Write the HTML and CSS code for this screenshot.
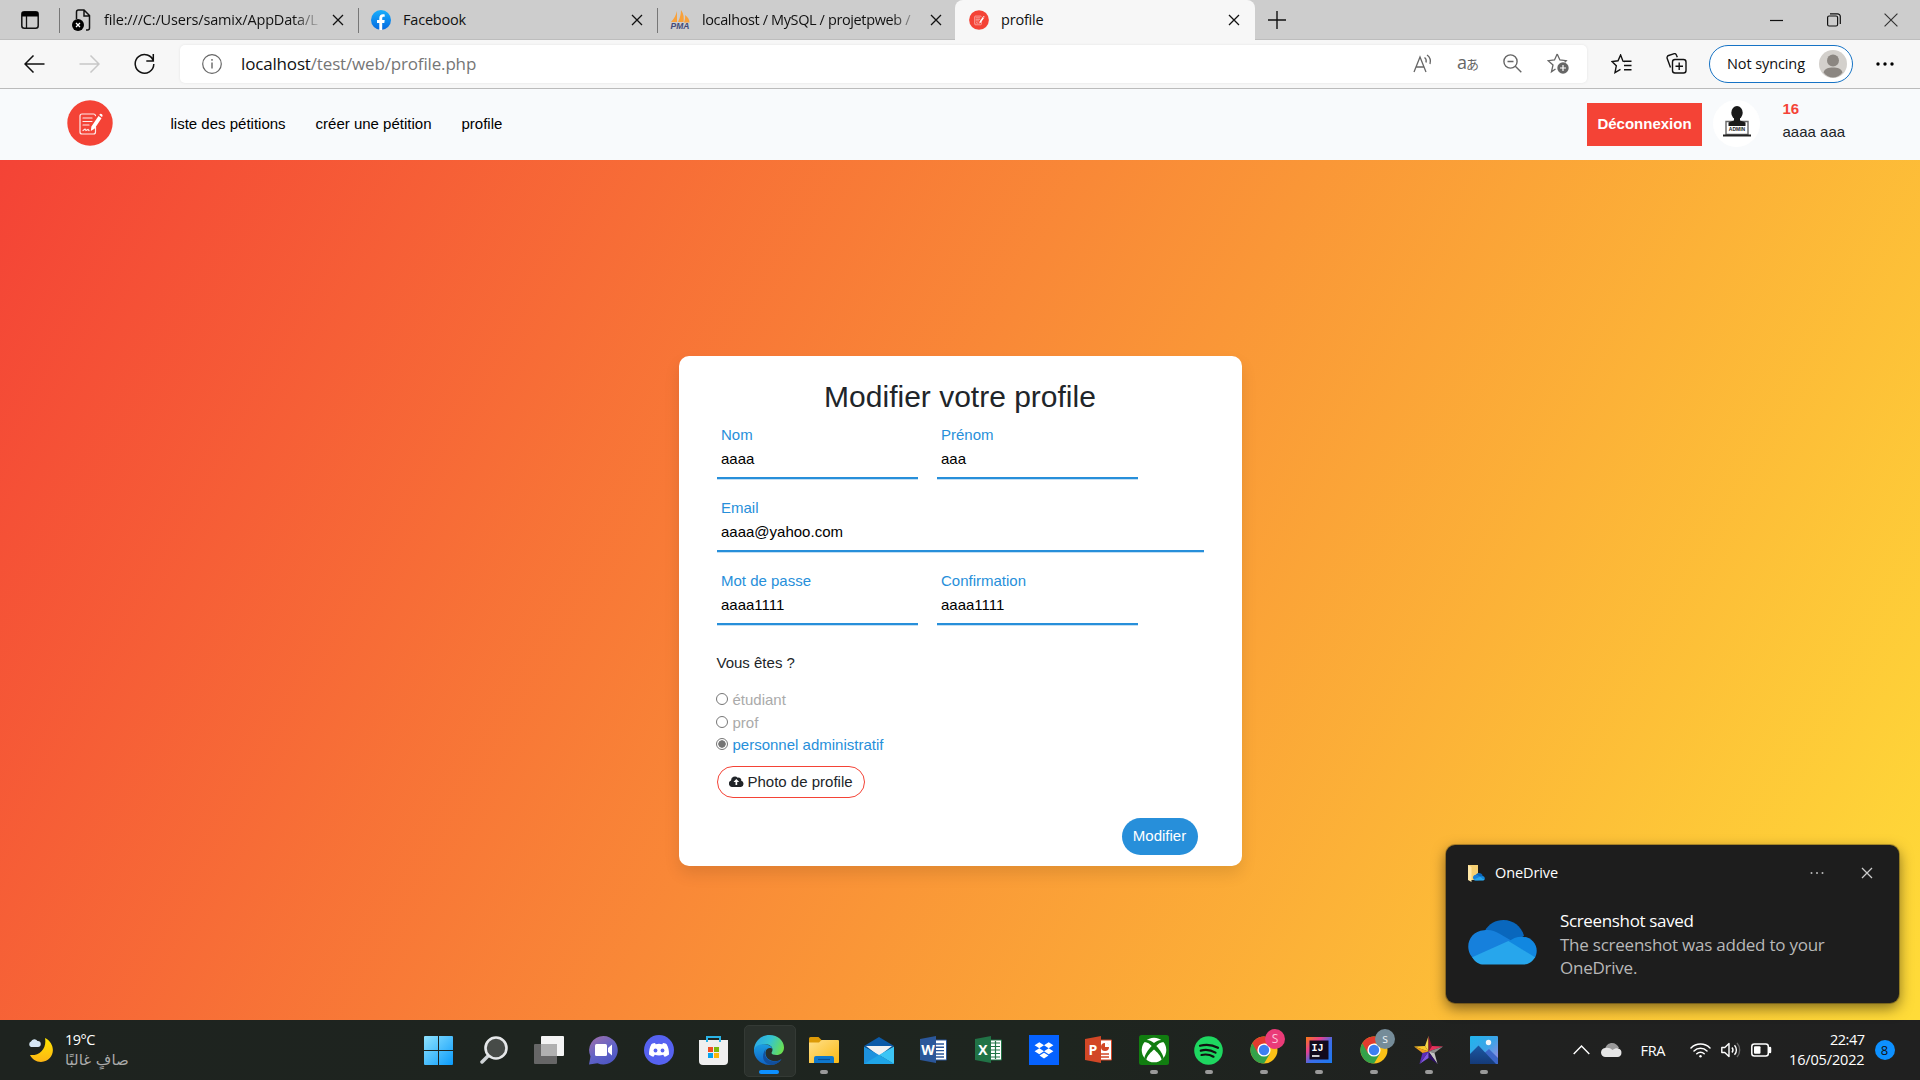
FILE: index.html
```html
<!DOCTYPE html>
<html lang="fr">
<head>
<meta charset="utf-8">
<title>profile</title>
<link rel="stylesheet" href="styles.css">
</head>
<body>
<svg class="defs" width="0" height="0" aria-hidden="true">
  <defs>
    <linearGradient id="win" x1="0" y1="0" x2="1" y2="1"><stop offset="0" stop-color="#8fe3ff"/><stop offset="1" stop-color="#0a9bfb"/></linearGradient>
    <linearGradient id="chat" x1="0" y1="0" x2=".6" y2="1"><stop offset="0" stop-color="#a46fa8"/><stop offset=".6" stop-color="#6264c7"/><stop offset="1" stop-color="#4f57c4"/></linearGradient>
    <linearGradient id="folder" x1="0" y1="0" x2="1" y2="1"><stop offset="0" stop-color="#ffe08a"/><stop offset="1" stop-color="#fbb914"/></linearGradient>
    <linearGradient id="edgeTop" x1="0" y1="0.3" x2="1" y2=".6"><stop offset="0" stop-color="#2aa7e8"/><stop offset=".5" stop-color="#35c4cf"/><stop offset="1" stop-color="#6be04f"/></linearGradient>
    <linearGradient id="edgeBottom" x1="0" y1="0" x2="0" y2="1"><stop offset="0" stop-color="#1b9de2"/><stop offset="1" stop-color="#0f62c4"/></linearGradient>
    <linearGradient id="photo" x1="0" y1="0" x2="1" y2="1"><stop offset="0" stop-color="#20b4ec"/><stop offset=".5" stop-color="#3ba4e8"/><stop offset="1" stop-color="#a885e0"/></linearGradient>
    <linearGradient id="mount" x1="0" y1="0" x2="0" y2="1"><stop offset="0" stop-color="#1b58a4"/><stop offset="1" stop-color="#153a78"/></linearGradient>
    <linearGradient id="fb" x1="0" y1="0" x2="0" y2="1"><stop offset="0" stop-color="#19affc"/><stop offset="1" stop-color="#0468e0"/></linearGradient>
    <linearGradient id="moon" x1="0" y1="0" x2="0" y2="1"><stop offset="0" stop-color="#ffe600"/><stop offset="1" stop-color="#fdb515"/></linearGradient>
    <linearGradient id="ij" x1="0" y1="0" x2="1" y2="1"><stop offset="0" stop-color="#f97a12"/><stop offset=".3" stop-color="#e8408f"/><stop offset=".55" stop-color="#3d6de8"/><stop offset="1" stop-color="#1b7af0"/></linearGradient>
    <symbol id="x" viewBox="0 0 12 12"><path d="M1 1l10 10M11 1L1 11" fill="none" stroke="currentColor" stroke-width="1.3"/></symbol>
    <symbol id="petition" viewBox="0 0 46 46">
      <circle cx="23" cy="23" r="22.7" fill="#f44336"/>
      <g fill="none" stroke="#fff" stroke-width="1.2" stroke-linecap="round" opacity=".9"><path d="M28.500 27v5a2 2 0 0 1-2 2H15a2 2 0 0 1-2-2V16a2 2 0 0 1 2-2h11.500a2 2 0 0 1 2 1.600"/><path d="M16 18h9M16 21.500h9M16 25h6M16 30.500l2-1.500 1 1.500 2-1 1 1"/></g>
      <path d="M31.500 16l3 2.200-7 10.500-3.700 2.300.6-4.400zM32.300 14.900l.6-.8a1.800 1.800 0 0 1 2.600 2.100l-.6.9z" fill="#fff"/>
    </symbol>
    <symbol id="chrome" viewBox="0 0 28 28">
      <circle cx="14" cy="14" r="13.500" fill="#fbc116"/>
      <path d="M14 14L2.300 7.200A13.500 13.500 0 0 0 14 27.500l6-10z" fill="#34a24a"/>
      <path d="M2.300 7.250A13.500 13.500 0 0 1 25.700 7.300L14 7.500 8 17.300z" fill="#e33b2e"/>
      <circle cx="14" cy="14" r="6.600" fill="#fff"/><circle cx="14" cy="14" r="5.200" fill="#3c7ff0"/>
    </symbol>
    <symbol id="onedrive" viewBox="0 0 70 46">
      <path d="M17 11C21 4 28 0 36 0c10 0 18 6.500 21 16L40 28z" fill="#0967bd"/>
      <path d="M16 10.500c6-1 11 .5 16 3.500l24 14-25 14H9C2 38 0 32 0 27c0-8 6-16 16-16.500z" fill="#1680dc"/>
      <path d="M55 17c8.500 0 15 6.500 15 14.500 0 3-1 5.500-2 7.500L41 22c4-3 8-5 14-5z" fill="#1187e0"/>
      <path d="M4 38l37-16.500L68.300 38C65.500 43 61 45.500 56 45.500H16C11 45.500 7 43 4 38z" fill="#27a6ec"/>
    </symbol>
  </defs>
</svg>

<div class="screen">
  <header class="tabstrip">
    <div class="tab-actions"><svg width="18" height="18" viewBox="0 0 18 18"><rect x=".8" y=".8" width="16.400" height="16.400" rx="2.500" fill="none" stroke="#111" stroke-width="1.500"/><path d="M1 1h16v4.500H1z"/><path d="M5.500 5v12" stroke="#111" stroke-width="1.300"/></svg></div>
    <div class="tab"><svg width="20" height="22" viewBox="0 0 20 22"><path d="M4.500 10V3a2 2 0 0 1 2-2h5.500l5.500 5.500V19a2 2 0 0 1-2 2H14M12 1v6h5.500" fill="none" stroke="#111" stroke-width="1.500"/><circle cx="6" cy="16" r="6"/><path d="M4 14l4 4M8 14l-4 4" stroke="#fff" stroke-width="1.300"/></svg><span class="tab-title path fade">file:///C:/Users/samix/AppData/L</span><svg class="close"><use href="#x"/></svg></div>
    <div class="tab"><svg width="20" height="20" viewBox="0 0 20 20"><circle cx="10" cy="10" r="10" fill="url(#fb)"/><path d="M8.300 20v-7H6v-2.900h2.300V8c0-2.500 1.400-3.800 3.500-3.800.9 0 1.900.2 1.900.2v2.300h-1.100c-1.100 0-1.400.7-1.400 1.400v2h2.500l-.4 2.900h-2.100v7z" fill="#fff"/></svg><span class="tab-title short">Facebook</span><svg class="close"><use href="#x"/></svg></div>
    <div class="tab"><svg width="20" height="20" viewBox="0 0 20 20"><path d="M7 1v11H1C4 9 6 5 7 1zM11 0c3 4 3 8 2.500 12H8C10 8 11 4 11 0zM15 5c3 2 4.500 5 4.500 7.500H14C15 10 15.500 7 15 5z" fill="#f9a13a"/><text x="10" y="19.300" class="pma" text-anchor="middle">PMA</text></svg><span class="tab-title long fade">localhost / MySQL / projetpweb /</span><svg class="close"><use href="#x"/></svg></div>
    <div class="tab active"><svg width="20" height="20"><use href="#petition"/></svg><span class="tab-title short">profile</span><svg class="close"><use href="#x"/></svg></div>
    <div class="new-tab"><svg width="18" height="18" viewBox="0 0 18 18"><path d="M9 0v18M0 9h18" stroke="#111" stroke-width="1.400"/></svg></div>
    <div class="window-controls">
      <span><svg width="13" height="13" viewBox="0 0 13 13"><path d="M0 6.500h13" stroke="#111" stroke-width="1.200"/></svg></span>
      <span><svg width="14" height="14" viewBox="0 0 14 14" fill="none" stroke="#111" stroke-width="1.200"><rect x=".6" y="3" width="10" height="10" rx="1.500"/><path d="M3 .8h7.500a2.800 2.800 0 0 1 2.800 2.800V11"/></svg></span>
      <span><svg width="14" height="14" viewBox="0 0 12 12"><path d="M.5.5l11 11M11.500.5l-11 11" stroke="#333" stroke-width="1"/></svg></span>
    </div>
  </header>

  <nav class="toolbar">
    <div class="nav-buttons">
      <span><svg width="21" height="18" viewBox="0 0 21 18" fill="none" stroke="#111" stroke-width="1.500"><path d="M20.500 9H1M9.500 .5L1 9l8.500 8.500"/></svg></span>
      <span><svg width="21" height="18" viewBox="0 0 21 18" fill="none" stroke="#c8c8c8" stroke-width="1.500"><path d="M.5 9H20M11.500 .5L20 9l-8.500 8.500"/></svg></span>
      <span><svg width="21" height="21" viewBox="0 0 21 21" fill="none" stroke="#111" stroke-width="1.500"><path d="M19.500 8.500a9.300 9.300 0 1 0 .3 2.500M19.300 1v7h-7"/></svg></span>
    </div>
    <div class="address">
      <svg width="20" height="20" viewBox="0 0 20 20"><circle cx="10" cy="10" r="9.300" fill="none" stroke="#666" stroke-width="1.200"/><path d="M10 8.500v6M10 5v1.700" stroke="#666" stroke-width="1.400"/></svg>
      <span class="url"><b>localhost</b>/test/web/profile.php</span>
      <div class="address-icons">
        <span><svg width="20" height="20" viewBox="0 0 20 20" fill="none" stroke="#666" stroke-width="1.300"><path d="M1 18L7 3l6 15M3 13h8M11.500 3.500c1.500 1 2 3 1.500 5M14 1c3 2 4 5 3 9"/></svg></span>
        <span class="translate">a<small>あ</small></span>
        <span><svg width="19" height="19" viewBox="0 0 19 19" fill="none" stroke="#666" stroke-width="1.400"><circle cx="7.500" cy="7.500" r="6.600"/><path d="M4.500 7.500h6M12.300 12.300l6 6"/></svg></span>
        <span><svg width="22" height="21" viewBox="0 0 22 21"><path d="M10.200 1l2.700 6 6.300.7-1.500 1.500M8.500 16l-4 2.800L6 12 1.200 7.700l6.300-.7 2.700-6" fill="none" stroke="#666" stroke-width="1.300"/><circle cx="16" cy="15" r="5.700" fill="#666"/><path d="M16 12v6M13 15h6" stroke="#fff" stroke-width="1.200"/></svg></span>
      </div>
    </div>
    <div class="toolbar-icons">
      <span><svg width="21" height="20" viewBox="0 0 21 20" fill="none" stroke="#111" stroke-width="1.400"><path d="M14 7.500l-2-.300L9.600 1 7 6.800l-6 .8 4.300 4.200L4 18.500l5.500-3.200M13 7.300h7.500M13 11.500h7.500M13 15.700h7.500"/></svg></span>
      <span><svg width="21" height="21" viewBox="0 0 21 21" fill="none" stroke="#111" stroke-width="1.400"><rect x="6.500" y="6.500" width="13.500" height="13.500" rx="2.500"/><path d="M13.200 9.500v7.500M9.500 13.200H17M4.500 14.500L1.200 5.500a2.300 2.300 0 0 1 1.400-3l5-1.700a2.300 2.300 0 0 1 2.900 1.400l.8 2"/></svg></span>
    </div>
    <div class="sync"><span>Not syncing</span><svg width="28" height="28" viewBox="0 0 28 28"><circle cx="14" cy="14" r="14" fill="#d3d0cc"/><circle cx="14" cy="10.500" r="6" fill="#8b8681"/><path d="M4.500 22.500c1-4 5-5 9.500-5s8.500 1 9.500 5c-2.500 3.500-6 5-9.500 5s-7-1.500-9.500-5z" fill="#8b8681"/></svg></div>
    <svg class="more" width="18" height="4" viewBox="0 0 18 4"><circle cx="2" cy="2" r="1.700"/><circle cx="9" cy="2" r="1.700"/><circle cx="16" cy="2" r="1.700"/></svg>
  </nav>

  <div class="site-header">
    <svg class="logo" width="46" height="46"><use href="#petition"/></svg>
    <div class="site-nav"><a>liste des pétitions</a><a>créer une pétition</a><a>profile</a></div>
    <a class="logout">Déconnexion</a>
    <div class="avatar"><svg width="28" height="32" viewBox="0 0 28 32"><path d="M3 15.500h22v13H3z" fill="#fff" stroke="#666" stroke-width="1.400"/><path d="M0 28.500h28v2H0z" fill="#222"/><ellipse cx="14" cy="6.800" rx="5.700" ry="6.700" fill="#1a1a1a"/><path d="M11 11h6v3.500l5.500 2V20h-17v-3.500l5.500-2z" fill="#1a1a1a"/><text x="14" y="24.800" class="admin" text-anchor="middle">ADMIN</text></svg></div>
    <div class="user"><b>16</b><span>aaaa aaa</span></div>
  </div>

  <main class="page">
    <form class="card">
      <h2>Modifier votre profile</h2>
      <div class="row"><div class="field half"><label>Nom</label><p>aaaa</p></div><div class="field half"><label>Prénom</label><p>aaa</p></div></div>
      <div class="row"><div class="field"><label>Email</label><p>aaaa@yahoo.com</p></div></div>
      <div class="row"><div class="field half"><label>Mot de passe</label><p>aaaa1111</p></div><div class="field half"><label>Confirmation</label><p>aaaa1111</p></div></div>
      <div class="question">Vous êtes ?</div>
      <div class="options">
        <div class="option"><i></i>étudiant</div>
        <div class="option"><i></i>prof</div>
        <div class="option checked"><i></i>personnel administratif</div>
      </div>
      <div class="upload"><svg width="15" height="11" viewBox="0 0 15 11"><path d="M3.400 11A3.300 3.300 0 0 1 2.100 4.600 3.800 3.800 0 0 1 8.700 1.800a2.600 2.600 0 0 1 3.500 3A3.200 3.200 0 0 1 12 11z" fill="#212529"/><path d="M7.300 3L4.500 6h2v3h1.700V6h2z" fill="#fff"/></svg>Photo de profile</div>
      <div class="submit">Modifier</div>
    </form>
  </main>

  <footer class="taskbar">
    <div class="weather">
      <svg width="26" height="26" viewBox="0 0 26 26"><path d="M17 1c12 6 10 23-4 24C8 25 4 22 2 18c10 1 17-7 15-17z" fill="url(#moon)"/><path d="M3 10a3 3 0 0 1 0-5.500A3.700 3.700 0 0 1 9.500 4 3 3 0 0 1 10 10z" fill="#d5e6f4"/></svg>
      <div><span>19°C</span><span class="arabic" dir="rtl">صافٍ غالبًا</span></div>
    </div>
    <div class="apps">
      <span><svg width="29" height="29" viewBox="0 0 29 29" fill="url(#win)"><path d="M1 0h13v14H0V1a1 1 0 0 1 1-1zM15 0h13a1 1 0 0 1 1 1v13H15zM0 15h14v14H1a1 1 0 0 1-1-1zM15 15h14v13a1 1 0 0 1-1 1H15z"/></svg></span>
      <span><svg width="28" height="28" viewBox="0 0 28 28"><path d="M2 26l7-7" stroke="#cfd3d6" stroke-width="3.500" stroke-linecap="round"/><circle cx="16" cy="12" r="10.500" fill="#474b48" stroke="#e6e8ea" stroke-width="2.600"/></svg></span>
      <span><svg width="30" height="28" viewBox="0 0 30 28"><rect y="8" width="23" height="20" rx="1" fill="#666"/><rect x="7" width="23" height="20" rx="1" fill="#f4f4f4"/><path d="M7 8h16v12H7z" fill="#b0b0b0"/></svg></span>
      <span><svg width="29" height="29" viewBox="0 0 29 29"><path d="M14.500 0a14.300 14.300 0 1 1-6 27.300L0 28.500l1.500-8A14.300 14.300 0 0 1 14.500 0z" fill="url(#chat)"/><rect x="6" y="8" width="12" height="12" rx="1.500" fill="#fff"/><path d="M19 12l4-3.500v11L19 16z" fill="#fff"/></svg></span>
      <span><svg width="30" height="30" viewBox="0 0 30 30"><circle cx="15" cy="15" r="15" fill="#5662f0"/><path d="M11 8c-2 .3-3.500 1-3.500 1C5.500 12 5 16 5 19.500c1.500 1.300 3 2 4.500 2.300l1.300-2a13 13 0 0 0 8.400 0l1.300 2c1.500-.3 3-1 4.500-2.300C25 16 24.500 12 22.500 9c0 0-1.500-.7-3.500-1l-.7 1.200a14 14 0 0 0-6.600 0z" fill="#fff"/><circle cx="11.500" cy="15.500" r="1.900" fill="#5662f0"/><circle cx="18.500" cy="15.500" r="1.900" fill="#5662f0"/></svg></span>
      <span><svg width="29" height="29" viewBox="0 0 29 29"><path d="M8 6V1h13v5" fill="none" stroke="#2ab4e6" stroke-width="2"/><path d="M0 4h29v21a4 4 0 0 1-4 4H4a4 4 0 0 1-4-4z" fill="#efefef"/><path d="M8 6V1.500M21 6V1.500" stroke="#2ab4e6" stroke-width="2"/><path d="M9 11h5v5H9z" fill="#f04e23"/><path d="M15 11h5v5h-5z" fill="#7db80a"/><path d="M9 17h5v5H9z" fill="#04a3ee"/><path d="M15 17h5v5h-5z" fill="#fcb70b"/></svg></span>
      <span class="current"><svg width="30" height="30" viewBox="0 0 30 30"><path d="M0 14C1 5 8 0 15.500 0 24 0 30 6 30 12.500c0 5-3.500 7.500-7.500 7.500-3 0-5-1-5-2 0-.8 1-1.200 1-3.500 0-3-3-5-6.500-5C5.500 9.500 1 13 .2 18z" fill="url(#edgeTop)"/><path d="M0 14.500C2 10 7 9 10.500 9.300c4 .2 8 2.400 8 5-1-2-6.500-2-7 3-.5 6 5 9.700 11.500 8.700 2-.3 3.700-1.300 4.500-2C25 28 20 30.200 15.500 30 6 29.800-.6 22 0 14.500z" fill="url(#edgeBottom)"/><path d="M12 13.500c-3 5 0 13 8.500 13 3 0 5.500-1 7-2.500-1.500 3-5.500 5.800-10 6C10 29 6 22 12 13.500z" fill="#124f9d"/></svg></span>
      <span class="running"><svg width="30" height="26" viewBox="0 0 30 26"><path d="M0 1.500A1.500 1.500 0 0 1 1.500 0h8L12.500 3v5H0z" fill="#dd9a07"/><path d="M0 5.500h10l2.500-2.500H29a1 1 0 0 1 1 1v21a1 1 0 0 1-1 1H0z" fill="url(#folder)"/><path d="M5 26v-5a2 2 0 0 1 2-2h16a2 2 0 0 1 2 2v5z" fill="#0f78cc"/><path d="M9 22.500h12" stroke="#0a4f94" stroke-width="1.200"/></svg></span>
      <span><svg width="30" height="27" viewBox="0 0 30 27"><path d="M0 9L15 0l15 9-15 10z" fill="#0b5aa8"/><path d="M2 9h26L15 19z" fill="#f2f2f2"/><path d="M0 9.500L15 18l15 9H0z" fill="#1d92de"/><path d="M30 9.500V27L15 18z" fill="#3cc5f5"/><path d="M0 27h30L15 18z" fill="#1fa5e8"/></svg></span>
      <span><svg width="28" height="28" viewBox="0 0 28 28"><path d="M15 4h11.500v20H15z" fill="#fff" stroke="#2b579a"/><path d="M16 8h8M16 11.300h8M16 14.600h8M16 18h8M16 21h8" stroke="#2b579a" stroke-width="1.400"/><path d="M0 3l16-3v27L0 24z" fill="#2b579a"/><text x="8" y="19" text-anchor="middle" class="office">W</text></svg></span>
      <span><svg width="28" height="28" viewBox="0 0 28 28"><path d="M15 4h11.500v20H15z" fill="#fff" stroke="#217346"/><path d="M16 7h9M16 10.500h9M16 14h9M16 17.500h9M16 21h9M20.500 5v18" stroke="#217346" stroke-width="1.200"/><path d="M0 3l16-3v27L0 24z" fill="#217346"/><text x="8" y="19" text-anchor="middle" class="office">X</text></svg></span>
      <span><svg width="30" height="30" viewBox="0 0 30 30"><path d="M0 0h30v30H0z" fill="#0562ff"/><path d="M10.300 7.300l4.700 3-4.700 3-4.700-3zM19.700 7.300l4.700 3-4.700 3-4.700-3zM10.300 13.300l4.700 3-4.700 3-4.700-3zM19.700 13.300l4.700 3-4.700 3-4.700-3zM15 17.800l4.500 2.800-4.500 2.800-4.500-2.800z" fill="#fff"/></svg></span>
      <span><svg width="28" height="28" viewBox="0 0 28 28"><path d="M15 4h11.500v20H15z" fill="#fff" stroke="#d24726"/><circle cx="20" cy="11" r="4" fill="#d24726"/><path d="M20 11V6.500a4.500 4.500 0 0 1 4.500 4.500z" fill="#fff"/><path d="M16 18h8M16 21h8" stroke="#d24726" stroke-width="1.400"/><path d="M0 3l16-3v27L0 24z" fill="#d24726"/><text x="8" y="19" text-anchor="middle" class="office">P</text></svg></span>
      <span class="running"><svg width="30" height="30" viewBox="0 0 30 30"><rect width="30" height="30" rx="2.500" fill="#117d10"/><circle cx="15" cy="15" r="12.300" fill="#fff"/><path d="M5.500 5.500C9 4 13 6.500 15 8c2-1.500 6-4 9.500-2.500l1 1.500C22 6.500 19 9 17.300 11c4 4 7 9 7.200 12l-1.800 2C22 21 18 17 15 14.500 12 17 8 21 7.300 25l-1.800-2c.2-3 3.200-8 7.200-12C11 9 8 6.500 4.500 7z" fill="#117d10"/></svg></span>
      <span class="running"><svg width="29" height="29" viewBox="0 0 29 29"><circle cx="14.500" cy="14.500" r="14.300" fill="#1ed760"/><path d="M6 9.800c6-1.800 12.500-1 18 2M6.800 14.600c5-1.300 10-.7 14.700 2M7.500 19c4.300-1 8-.6 12 1.700" fill="none" stroke="#111" stroke-width="2.200" stroke-linecap="round"/></svg></span>
      <span class="running"><svg width="28" height="28"><use href="#chrome"/></svg><em class="badge pink">S</em></span>
      <span class="running"><svg width="26" height="26" viewBox="0 0 26 26"><path d="M0 0h26v26H0z" fill="url(#ij)"/><path d="M3.500 3.500h19v19h-19z" fill="#120a1c"/><path d="M6 19h7.500" stroke="#fff" stroke-width="1.600"/><text x="5.500" y="13.500" class="idea">IJ</text></svg></span>
      <span class="running"><svg width="28" height="28"><use href="#chrome"/></svg><em class="badge slate">s</em></span>
      <span class="running"><svg width="29" height="28" viewBox="0 0 29 28"><path d="M14.500 0v15.500L11 10z" fill="#f6d64b"/><path d="M14.500 0L18 10l-3.500 5.500z" fill="#8a1236"/><path d="M18 10l11 .5-14.500 5z" fill="#e8305a"/><path d="M29 10.500L20.500 17l-6-1.500z" fill="#8b8b8b"/><path d="M20.500 17l3 11-9-12.500z" fill="#c4c4c4"/><path d="M23.500 28l-9-6v-6.500z" fill="#2d0f66"/><path d="M14.500 15.500V22l-9 6z" fill="#8257e0"/><path d="M5.500 28l3-11 6-1.500z" fill="#5b2bb8"/><path d="M8.500 17L0 10.500l14.500 5z" fill="#f09c1d"/><path d="M0 10.500L11 10l3.500 5.500z" fill="#fbc72a"/></svg></span>
      <span class="running"><svg width="28" height="28" viewBox="0 0 28 28"><rect width="28" height="28" rx="1" fill="url(#photo)"/><circle cx="18.500" cy="6.500" r="2.700" fill="#f2f5f8"/><path d="M11 20l8-7 9 9v6H11z" fill="#3c66c8"/><path d="M0 18L8.500 9.500 26 28H0z" fill="url(#mount)"/></svg></span>
    </div>
    <div class="tray">
      <svg class="chev" width="17" height="10" viewBox="0 0 17 10"><path d="M.7 9L8.500 1l7.800 8" fill="none" stroke="#fff" stroke-width="1.400"/></svg>
      <svg class="cloud" width="21" height="14" viewBox="0 0 21 14"><path d="M4 6C5 2 8 0 11 0c3 0 6 2 7 5l-9 5z" fill="#9a9a9a"/><path d="M4.500 14a4.400 4.400 0 0 1 0-9c3-.5 5 .5 7 2 2-1.500 4-2 5.500-1.500A4.300 4.300 0 0 1 16.500 14z" fill="#e6e6e6"/></svg>
      <span class="lang">FRA</span>
      <svg class="wifi" width="21" height="16" viewBox="0 0 21 16" fill="none" stroke="#fff" stroke-width="1.500" stroke-linecap="round"><path d="M1 6a13.500 13.500 0 0 1 19 0M4 9a9.300 9.300 0 0 1 13 0M6.800 11.800a5.300 5.300 0 0 1 7.400 0"/><circle cx="10.500" cy="14.200" r="1.200" fill="#fff" stroke="none"/></svg>
      <svg class="sound" width="20" height="16" viewBox="0 0 20 16" fill="none" stroke="#fff" stroke-width="1.400" stroke-linejoin="round"><path d="M.8 5.500h3L8 1.500v13l-4.200-4h-3zM11 5.500a4 4 0 0 1 0 5M13.500 3.200a7 7 0 0 1 0 9.600"/><path d="M16 1a10.500 10.500 0 0 1 0 14" stroke="#666"/></svg>
      <svg class="battery" width="21" height="14" viewBox="0 0 21 14"><rect x=".8" y="1" width="16.500" height="12" rx="2.500" fill="none" stroke="#fff" stroke-width="1.500"/><rect x="3" y="3.300" width="6.500" height="7.400" rx="1" fill="#fff"/><path d="M19 5v4" stroke="#fff" stroke-width="2.500" stroke-linecap="round"/></svg>
      <div class="clock"><span>22:47</span><span class="date">16/05/2022</span></div>
      <span class="count">8</span>
    </div>
  </footer>

  <aside class="toast">
    <div class="toast-head">
      <svg width="17" height="18" viewBox="0 0 17 18"><path d="M0 1h10v15H0z" fill="#f5cf72"/><path d="M0 1l3.500 2v15L0 16z" fill="#ffe7a6"/><g transform="translate(5 9) scale(.17)"><use href="#onedrive" width="70" height="46"/></g></svg>
      <span>OneDrive</span>
      <svg class="dots" width="14" height="4" viewBox="0 0 14 4" fill="#bbb"><circle cx="1.500" cy="2" r="1"/><circle cx="7" cy="2" r="1"/><circle cx="12.500" cy="2" r="1"/></svg>
      <svg class="dismiss" width="12" height="12"><use href="#x"/></svg>
    </div>
    <div class="toast-body">
      <svg width="69" height="45"><use href="#onedrive"/></svg>
      <div class="toast-text"><strong>Screenshot saved</strong><p>The screenshot was added to your</p><p>OneDrive.</p></div>
    </div>
  </aside>
</div>
</body>
</html>
```
FILE: styles.css
```css
* { box-sizing: border-box; }
body { margin: 0; overflow: hidden; font-family: "Liberation Sans", Arial, sans-serif; font-size: 15px; color: #212529; }
p, h2 { margin: 0; font-weight: 400; }
svg { display: block; flex: none; }
.defs { position: absolute; }
.screen { position: relative; width: 1920px; height: 1080px; display: grid; grid-template-rows: 40px 49px 71px 860px 60px; }
.tabstrip, .toolbar, .taskbar, .toast { font-family: "Open Sans", "Noto Sans", sans-serif; }

/* tab strip */
.tabstrip { display: flex; background: #cdcdcd; color: #111; box-shadow: inset 0 -1px 0 #bdbdbd; }
.tab-actions { width: 58px; padding: 11px 0 0 21px; }
.tab { position: relative; display: flex; align-items: center; width: 299px; padding: 0 13px 0 14px; }
.tab::before { content: ""; position: absolute; left: 0.5px; top: 8px; width: 1px; height: 25px; background: #777; }
.tab-title { flex: 1; margin: 0 5px 2px 12px; white-space: nowrap; font-size: 14.5px; letter-spacing: -0.2px; }
.tab-title.path { letter-spacing: -0.16px; }
.tab-title.long { letter-spacing: -0.38px; }
.fade { -webkit-mask-image: linear-gradient(90deg, #000 85%, transparent 98%); mask-image: linear-gradient(90deg, #000 85%, transparent 98%); }
.close { width: 12px; height: 12px; }
.tab.active { background: #f7f7f7; border-radius: 8px 8px 0 0; width: 300px; padding: 0 15px 0 14px; }
.tab.active::before { display: none; }
.new-tab { padding: 11px 0 0 13px; }
.window-controls { display: flex; margin-left: auto; }
.window-controls span { display: flex; align-items: center; justify-content: center; width: 57.5px; }

/* toolbar */
.toolbar { display: flex; align-items: center; padding-bottom: 1px; background: #f7f7f7; border-bottom: 1px solid #bbb; color: #111; }
.nav-buttons { display: flex; padding-left: 7px; }
.nav-buttons span, .toolbar-icons span { display: flex; align-items: center; justify-content: center; width: 55px; }
.address { display: flex; align-items: center; width: 1407px; height: 38px; margin-left: 8px; padding-left: 22px; border-radius: 5px; background: #fff; box-shadow: 0 0 3px rgba(0,0,0,.08); }
.url { margin: 0 0 1px 19px; font-size: 17px; letter-spacing: -0.16px; color: #767676; }
.url b { font-weight: 400; color: #111; }
.address-icons { display: flex; margin-left: auto; padding-right: 7px; }
.address-icons span { display: flex; align-items: center; justify-content: center; width: 45px; }
.address-icons .translate { font-family: "Open Sans", "Noto Sans CJK JP", sans-serif; font-size: 18px; line-height: 20px; padding-bottom: 3px; letter-spacing: -1px; color: #666; }
.translate small { font-size: 13px; padding-top: 4px; }
.toolbar-icons { display: flex; padding-left: 6.5px; }
.sync { display: flex; align-items: center; justify-content: space-between; width: 144px; height: 38px; margin-left: 5.5px; padding: 0 5px 0 17px; border: 1.5px solid #1673c5; border-radius: 19px; background: #fff; font-size: 14.5px; letter-spacing: -0.1px; white-space: nowrap; }
.more { margin-left: 23px; }

/* site header */
.site-header { display: flex; align-items: flex-start; background: #f8fafc; color: #000; }
.logo { margin: 11px 0 0 67px; }
.site-nav { display: flex; gap: 30px; margin: 26px 0 0 57.5px; line-height: 18px; }
.logout { width: 115px; height: 43px; margin: 14px 0 0 auto; background: #f44336; color: #fff; font-weight: 700; line-height: 41px; text-align: center; }
.avatar { display: flex; justify-content: center; width: 47px; height: 47px; margin: 11px 0 0 11px; padding-top: 6px; border-radius: 50%; background: #fff; }
.user { display: flex; flex-direction: column; width: 137.500px; margin: 9px 0 0 22.500px; line-height: 22.5px; color: #212529; }
.user b { color: #f44336; }

/* profile form */
.page { display: flex; justify-content: center; align-items: flex-start; padding-top: 196px; background: linear-gradient(120deg, #f44336 0%, #ffdc38 100%); }
.card { display: flex; flex-direction: column; align-items: flex-start; width: 563px; height: 510px; padding: 23px 38px 0; border-radius: 10px; background: #fff; box-shadow: 0 8px 16px rgba(0,0,0,.1); }
.card h2 { align-self: center; margin-bottom: 9px; font-size: 30px; line-height: 36px; }
.row { display: flex; gap: 19px; width: 100%; margin-bottom: 18px; line-height: 22px; }
.field { flex: 1; height: 55px; padding-left: 4.5px; border-bottom: 2px solid #278fda; box-shadow: 0 1px 0 #c4dff3; }
.half { flex: none; width: 201px; }
.field label { display: block; margin-bottom: 2px; color: #278fda; }
.field p { color: #000; }
.question { margin: 9px 0 15px; line-height: 22px; }
.option { display: flex; height: 22.5px; line-height: 22px; color: #aaa; }
.option i { width: 12px; height: 12px; margin: 4px 4.5px 0 -0.5px; border: 1px solid #767676; border-radius: 50%; }
.option.checked { color: #278fda; }
.option.checked i { background: radial-gradient(circle, #767676 3.4px, #fff 4px); }
.upload { display: flex; align-items: center; gap: 4px; width: 148px; height: 32px; margin-top: 9px; padding-left: 11px; border: 1px solid #f44336; border-radius: 16px; }
.submit { align-self: flex-end; width: 76px; height: 37px; margin: 20px 6px 0 0; border-radius: 19px; background: #278fda; color: #fff; line-height: 36px; text-align: center; }

/* taskbar */
.taskbar { display: flex; background: linear-gradient(90deg, #1e231f 0%, #1e251f 55%, #202120 78%, #202020 100%); color: #fff; }
.weather { display: flex; width: 411px; padding: 10px 0 0 28px; font-size: 14.5px; letter-spacing: -0.5px; }
.weather svg { margin: 7px 11px 0 0; }
.weather div { display: flex; flex-direction: column; line-height: 20px; }
.weather .arabic { font-family: "DejaVu Sans", sans-serif; color: #aaa; font-size: 15px; letter-spacing: 0; }
.apps { display: flex; }
.apps span { position: relative; display: flex; align-items: center; justify-content: center; width: 55px; height: 60px; }
.running::after { content: ""; position: absolute; left: 24px; top: 50px; width: 8px; height: 4px; border-radius: 2px; background: #9a9a9a; }
.current::before { content: ""; position: absolute; left: 3px; top: 5px; width: 50px; height: 50px; border-radius: 5px; border: 1px solid #343a35; background: #2a302b; }
.current::after { content: ""; position: absolute; left: 18px; top: 50px; width: 20px; height: 4px; border-radius: 2px; background: #0d90ff; }
.current svg { position: relative; }
.badge { position: absolute; left: 29px; top: 9px; width: 20px; height: 20px; border-radius: 50%; font: 12px/20px "Open Sans", sans-serif; text-align: center; }
.pink { background: #ea3b78; color: #fbc4d8; }
.slate { background: #758c99; color: #e8eef2; }
.office { font: 700 14px "Open Sans", sans-serif; fill: #fff; }
.idea { font: 700 10px "Liberation Mono", monospace; fill: #fff; }
.pma { font: italic 700 8.5px "Liberation Sans", sans-serif; fill: #444a78; }
.admin { font: 700 5px "Liberation Sans", sans-serif; fill: #222; }
.tray { display: flex; align-items: center; flex: 1; padding-left: 61.500px; font-size: 14.5px; }
.cloud { margin-left: 11px; }
.lang { width: 32px; margin-left: 19px; letter-spacing: -0.3px; }
.wifi { margin-left: 17px; }
.sound { margin-left: 10px; }
.battery { margin-left: 10px; }
.clock { display: flex; flex-direction: column; width: 93px; line-height: 20px; text-align: right; letter-spacing: -0.5px; }
.clock .date { letter-spacing: -0.15px; }
.count { width: 20px; height: 20px; margin-left: 10px; border-radius: 50%; background: #0d90ff; color: #111; font-size: 13px; line-height: 20px; text-align: center; }

/* notification */
.toast { position: absolute; left: 1446px; top: 845px; width: 453px; height: 158px; padding: 18px 26px 0 22px; border-radius: 9px; background: #1d1d1d; box-shadow: 0 5px 14px rgba(0,0,0,.5), 0 0 0 1px rgba(60,50,20,.35); color: #fff; }
.toast-head { display: flex; align-items: center; height: 20px; font-size: 14.5px; letter-spacing: -0.1px; }
.toast-head span { margin: 0 0 2px 10px; }
.dots { margin-left: auto; margin-right: 37px; }
.dismiss { color: #ccc; }
.toast-body { display: flex; margin-top: 26px; }
.toast-body > svg { margin-top: 11px; }
.toast-text { margin-left: 23px; font-size: 17px; line-height: 23.5px; letter-spacing: -0.24px; white-space: nowrap; color: #b8b8b8; }
.toast-text strong { display: block; font-weight: 400; color: #fff; letter-spacing: -0.35px; }
```
